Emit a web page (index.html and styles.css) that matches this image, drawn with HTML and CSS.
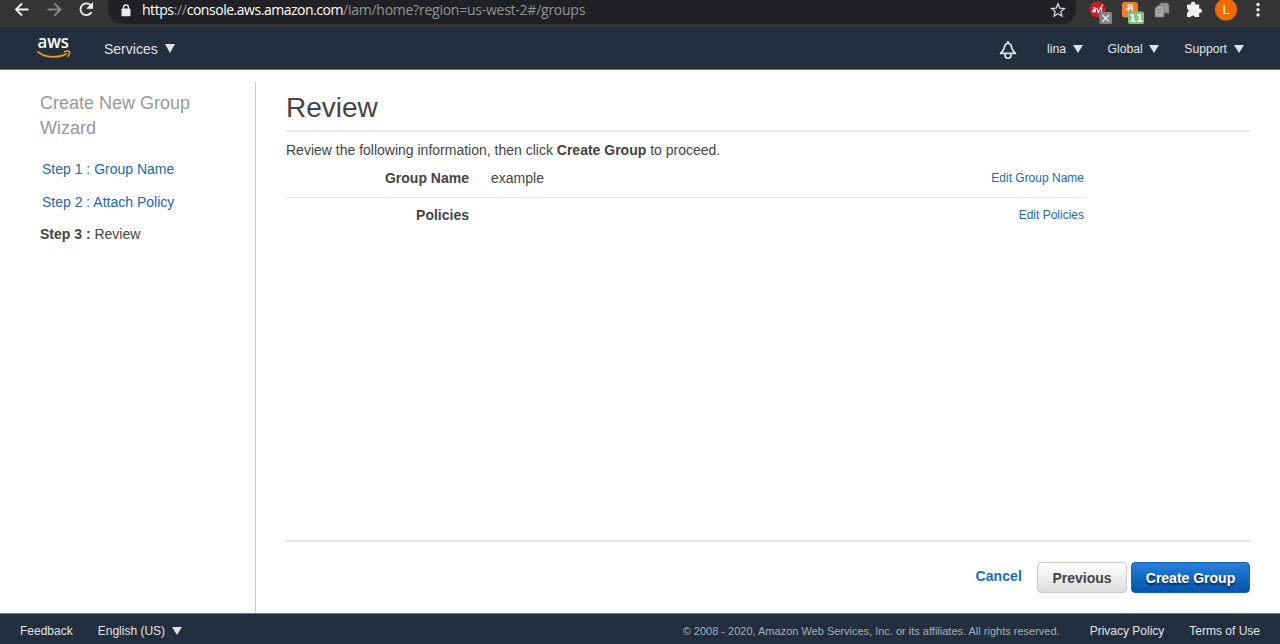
FILE: index.html
```html
<!DOCTYPE html>
<html lang="en">
<head>
<meta charset="utf-8">
<title>IAM - Create New Group</title>
<link rel="stylesheet" href="styles.css">
</head>
<body>
<div class="browser">
  <svg class="nav-icons" width="108" height="27" viewBox="0 0 108 27" fill="none" stroke-width="1.800">
    <path d="M28.5 9.5H16.500M22 3.500L16 9.500l6 6" stroke="#f1f1f1"/>
    <path d="M47.500 9.500H60M54.500 3.500l6 6-6 6" stroke="#86888a"/>
    <path d="M91 5.500A5.900 5.900 0 1 0 91.600 12" stroke="#f1f1f1"/>
    <path d="M93 2v6.800h-6.800z" fill="#f1f1f1"/>
  </svg>
  <div class="address">
    <svg class="lock" width="10" height="13" viewBox="0 0 10 13"><path d="M2.500 5V3.500a2.500 2.500 0 0 1 5 0V5" fill="none" stroke="#e8eaed" stroke-width="1.300"/><rect x=".5" y="4.600" width="9" height="7.700" rx="1" fill="#e8eaed"/></svg>
    <span class="url"><b>https</b>://<b>console.aws.amazon.com</b>/iam/home?region=us-west-2#/groups</span>
    <svg class="star" width="16" height="16" viewBox="0 0 16 16"><path d="M8 1.800l1.800 4.300 4.700.4-3.600 3 1.100 4.600L8 11.700l-4 2.400 1.100-4.600-3.600-3 4.700-.4z" fill="none" stroke="#d5d7d9" stroke-width="1.300"/></svg>
  </div>
  <div class="extensions">
    <svg width="204" height="27" viewBox="1076 0 204 27">
      <circle cx="1097.500" cy="9.500" r="8" fill="#c6202b"/>
      <path d="M1093 8q2-1 2.300.5v3.500M1095.300 10q-2.500-.3-2.500 1t2.500.7M1096.800 8l1.500 4.500 4.200-8M1101.500 8v4.500" fill="none" stroke="#fff" stroke-width="1.200"/>
      <rect x="1099.500" y="12" width="12.500" height="12" rx="1.500" fill="#808284"/>
      <path d="M1102.500 15l6.500 6.500m0-6.500l-6.500 6.500" stroke="#eee" stroke-width="1.300"/>
      <rect x="1122" y="2" width="16" height="15.500" rx="3" fill="#f47b29"/>
      <path d="M1127 6q3-2 5-.7c1 1.500-.5 2.500-2.500 2.500 2.500 0 3.500 1 2.700 3M1129.500 5l-1 6M1126 8.500l1.500 1.500" fill="none" stroke="#fff" stroke-width="1.300"/>
      <rect x="1128" y="11.500" width="16" height="12.500" rx="2" fill="#7cc47e"/>
      <text class="badge" x="1136" y="22">11</text>
      <g stroke="#6d6d6d" stroke-width=".7"><path d="M1160 3h7l2 2v8h-9z" fill="#969696"/><path d="M1155 8.500l3-3h6V17h-9z" fill="#a9a9a9"/></g>
      <path d="M1157 9.500h4m-4 3h4" stroke="#808080"/>
      <path d="M1187 4.500h4a2.200 2.200 0 1 1 4.200 0h4v4.200a2.200 2.200 0 1 1 0 4.200V17h-4.300a2.200 2.200 0 0 0-4.200 0H1187v-4a2.200 2.200 0 0 0 0-4.200z" fill="#f1f1f1"/>
      <circle cx="1226" cy="9.500" r="11" fill="#ef6c00"/>
      <text class="avatar" x="1226" y="14">L</text>
      <g fill="#f1f1f1"><circle cx="1258" cy="4.500" r="1.700"/><circle cx="1258" cy="9.700" r="1.700"/><circle cx="1258" cy="14.900" r="1.700"/></g>
    </svg>
  </div>
</div>
<header class="topbar">
  <div class="brand">
    <svg width="34" height="34" viewBox="0 -10 34 34"><text class="aws" x=".5" y="11" textLength="31.500" lengthAdjust="spacingAndGlyphs">aws</text><path d="M.5 14.600c8.500 6.800 21 7 29.500 2-9 5-21.500 4-29.500-2z" fill="#f79a1c" stroke="#f79a1c" stroke-width="1.500"/><path d="M26.800 15.100c2-1 4.500-1.200 5.500-.6.600 1.300-.2 3.800-1.800 5.300" fill="none" stroke="#f79a1c" stroke-width="1.500"/></svg>
  </div>
  <a class="services">Services <i class="caret"></i></a>
  <nav class="account">
    <svg class="bell" width="18" height="18" viewBox="0 0 18 18" fill="none" stroke="#e0e4e6" stroke-width="1.700"><path d="M9 0v2M1.500 12.300c2.500-2 3.300-3.300 3.800-5.800C5.700 4 7 2.300 9 2.300s3.300 1.700 3.700 4.200c.5 2.500 1.300 3.800 3.800 5.800z" stroke-linejoin="round"/><path d="M6 12.800v1.500a3 3 0 0 0 6 0v-1.500"/></svg>
    <a class="user">lina <i class="caret"></i></a>
    <a class="region">Global <i class="caret"></i></a>
    <a class="support">Support <i class="caret"></i></a>
  </nav>
</header>
<main class="page">
  <aside class="wizard">
    <h2>Create New Group Wizard</h2>
    <a class="step">Step 1 : Group Name</a>
    <a class="step">Step 2 : Attach Policy</a>
    <div class="step current"><b>Step 3 :</b> Review</div>
  </aside>
  <section class="content">
    <h1>Review</h1>
    <p class="intro">Review the following information, then click <b>Create Group</b> to proceed.</p>
    <div class="row"><b class="label">Group Name</b><span class="value">example</span><a class="edit">Edit Group Name</a></div>
    <div class="row last"><b class="label">Policies</b><span class="value"></span><a class="edit">Edit Policies</a></div>
    <div class="actions">
      <a class="cancel">Cancel</a>
      <button class="btn">Previous</button>
      <button class="btn primary">Create Group</button>
    </div>
  </section>
</main>
<footer class="footer">
  <a>Feedback</a>
  <a class="language">English (US) <i class="caret"></i></a>
  <span class="copyright">© 2008 - 2020, Amazon Web Services, Inc. or its affiliates. All rights reserved.</span>
  <a class="privacy">Privacy Policy</a>
  <a class="terms">Terms of Use</a>
</footer>
</body>
</html>
```
FILE: styles.css
```css
* { box-sizing: border-box; }
body { margin: 0; width: 1280px; height: 644px; overflow: hidden; display: flex; flex-direction: column; font: 14px "Liberation Sans", Arial, sans-serif; color: #444; background: #fff; }
svg { display: block; flex: none; }
.browser { height: 28px; flex: none; display: flex; background: #353535; border-bottom: 1px solid #29323d; }
.address { width: 968px; height: 24px; display: flex; align-items: flex-start; background: #202124; border-radius: 0 0 14px 14px; }
.lock { margin: 4px 0 0 13px; }
.url { margin-left: 11px; flex: 1; font: 14px/20px "Open Sans", "Noto Sans", sans-serif; letter-spacing: -.25px; color: #929496; white-space: nowrap; }
.url b { font-weight: 400; letter-spacing: -.47px; color: #fff; }
.star { margin: 2px 10px 0 0; }
.badge { font: bold 10px "DejaVu Sans", sans-serif; fill: #fff; text-anchor: middle; }
.avatar { font: 13px "Liberation Sans", sans-serif; fill: #fff; text-anchor: middle; }
.topbar { height: 42px; flex: none; display: flex; align-items: center; background: #232f3e; border-bottom: 1px solid #6f7883; color: #e0e4e6; }
.brand { margin-left: 37px; width: 67px; margin-top: -9px; }
.aws { font: 600 17.500px "Open Sans", sans-serif; fill: #fff; }
.caret { display: inline-block; border: 5.5px solid transparent; border-top: 9px solid #dce2e2; border-bottom: 0; }
.services { display: flex; align-items: center; gap: 7px; }
.account { margin-left: auto; padding-right: 36.500px; display: flex; align-items: center; font-size: 12.200px; }
.account a { display: flex; align-items: center; gap: 6.500px; }
.account .caret { border-width: 8px 5px 0; }
.bell { margin: 2px 30px 0 0; }
.region { margin: 0 25px; }
.page { flex: 1; min-height: 0; display: flex; padding-top: 12px; }
.wizard { width: 256px; border-right: 1px solid #ccc; padding: 9px 30px 0 40px; }
.wizard h2 { margin: 0 0 19px; font-size: 18px; line-height: 25px; font-weight: 400; color: #999; }
.step { display: block; height: 32.500px; line-height: 18px; padding-left: 2px; color: #2268b0; }
.current { padding-left: 0; color: #444; }
.content { flex: 1; display: flex; flex-direction: column; padding: 9px 30px 0; }
h1 { margin: 0; height: 41px; border-bottom: 2px solid #eaeaea; font-size: 28px; line-height: 34px; font-weight: 400; }
.intro { margin: 9px 0 0; line-height: 18px; }
.row { width: 800px; height: 39px; display: flex; padding-top: 10px; border-bottom: 1px solid #e8e8e8; line-height: 18px; }
.last { border: 0; padding-top: 8px; }
.label { width: 183px; text-align: right; }
.value { flex: 1; padding-left: 22px; }
.edit { padding-right: 2px; font-size: 12px; color: #2268b0; }
.actions { margin-top: auto; height: 73px; display: flex; justify-content: flex-end; padding-top: 20px; border-top: 2px solid #e5e5e5; }
.cancel { font-weight: 700; color: #146eb4; line-height: 28px; margin-right: 15px; letter-spacing: .1px; }
.btn { width: 90px; height: 31px; padding: 0; margin-right: 4px; border: 1px solid #ccc; border-radius: 4px; background: linear-gradient(#fff, #ddd); font: bold 14px "Liberation Sans", sans-serif; color: #444; }
.primary { width: 119px; margin: 0; border-color: #1166bb; background: linear-gradient(#287fd9, #0354ad); color: #fff; text-shadow: 0 2px 2px #123; }
.footer { height: 31px; flex: none; display: flex; align-items: center; padding: 3px 20px 0; background: #232f3e; border-top: 1px solid #6f7883; color: #e0e4e6; font-size: 12px; white-space: nowrap; }
.language { margin-left: 25px; display: flex; align-items: center; gap: 7px; }
.language .caret { border-width: 8px 5px 0; }
.copyright { margin-left: auto; font-size: 11px; color: #a5afb2; }
.privacy { margin-left: 30px; }
.terms { margin-left: 25px; }
```
